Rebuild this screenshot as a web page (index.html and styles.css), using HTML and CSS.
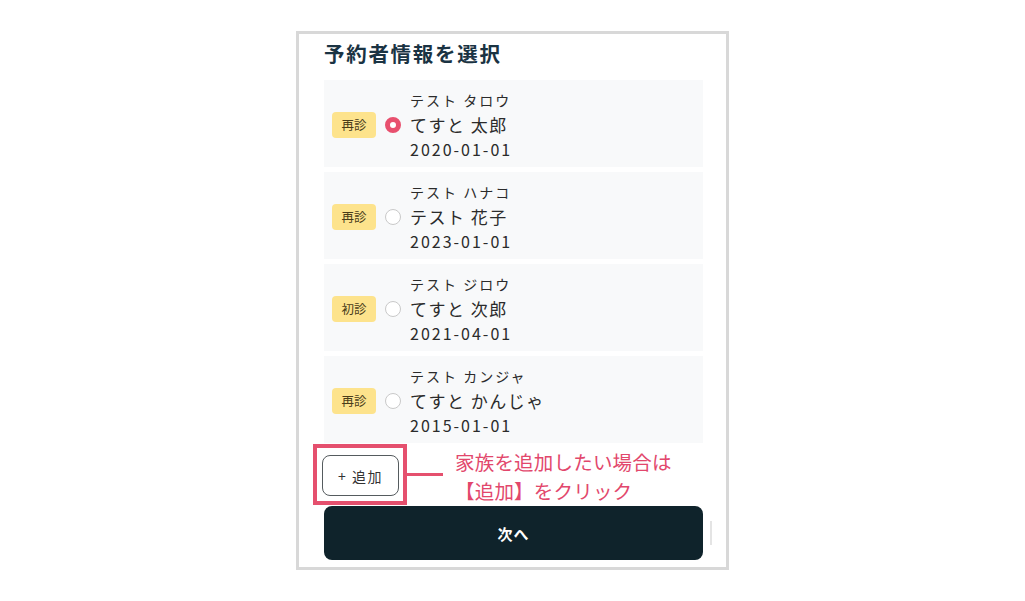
FILE: index.html
```html
<!DOCTYPE html>
<html lang="ja">
<head>
<meta charset="utf-8">
<title>予約者情報を選択</title>
<link rel="stylesheet" href="styles.css">
</head>
<body>
<div class="frame">
  <h1 class="title">予約者情報を選択</h1>
  <div class="list">
    <div class="card">
      <span class="badge">再診</span>
      <span class="radio checked"></span>
      <div class="info">
        <div class="kana">テスト タロウ</div>
        <div class="name">てすと 太郎</div>
        <div class="date">2020-01-01</div>
      </div>
    </div>
    <div class="card">
      <span class="badge">再診</span>
      <span class="radio"></span>
      <div class="info">
        <div class="kana">テスト ハナコ</div>
        <div class="name">テスト 花子</div>
        <div class="date">2023-01-01</div>
      </div>
    </div>
    <div class="card">
      <span class="badge">初診</span>
      <span class="radio"></span>
      <div class="info">
        <div class="kana">テスト ジロウ</div>
        <div class="name">てすと 次郎</div>
        <div class="date">2021-04-01</div>
      </div>
    </div>
    <div class="card">
      <span class="badge">再診</span>
      <span class="radio"></span>
      <div class="info">
        <div class="kana">テスト カンジャ</div>
        <div class="name">てすと かんじゃ</div>
        <div class="date">2015-01-01</div>
      </div>
    </div>
  </div>
  <div class="add-row">
    <div class="add-wrap">
      <button class="add-btn">+ 追加</button>
      <span class="highlight"></span>
    </div>
    <span class="connector"></span>
    <div class="note">
      <div>家族を追加したい場合は</div>
      <div>【追加】をクリック</div>
    </div>
  </div>
  <button class="next-btn">次へ</button>
  <span class="scroll-thumb"></span>
</div>
</body>
</html>
```
FILE: styles.css
```css
html, body {
  margin: 0;
  padding: 0;
  background: #ffffff;
}
body {
  font-family: "Noto Sans CJK JP", "Noto Sans", sans-serif;
  color: #2b2b2b;
}
.frame {
  position: relative;
  box-sizing: border-box;
  width: 433px;
  height: 539px;
  margin: 31px auto 0;
  border: 3px solid #d8d8d8;
  padding: 4px 23px 7px 25px;
  display: flex;
  flex-direction: column;
}
.title {
  margin: 0 0 12px;
  font-size: 20.5px;
  line-height: 30px;
  font-weight: 700;
  letter-spacing: 1.7px;
  color: #1a3343;
}
.list {
  display: flex;
  flex-direction: column;
  gap: 5px;
}
.card {
  box-sizing: border-box;
  height: 87px;
  background: #f8f9fa;
  display: flex;
  align-items: center;
  padding: 8px 8px 5px 8px;
}
.badge {
  width: 44px;
  height: 26px;
  border-radius: 4px;
  background: #fde38c;
  font-size: 12.5px;
  line-height: 26px;
  text-align: center;
  color: #4a3d1a;
  flex-shrink: 0;
}
.radio {
  box-sizing: border-box;
  width: 16px;
  height: 16px;
  margin: 0 9px;
  border-radius: 50%;
  border: 1px solid #c9c9c9;
  background: #fff;
  flex-shrink: 0;
}
.radio.checked {
  border: 5px solid #e8506e;
}
.info {
  display: flex;
  flex-direction: column;
}
.kana {
  font-size: 14px;
  line-height: 24px;
  letter-spacing: 2px;
}
.name {
  font-size: 17px;
  line-height: 25px;
  letter-spacing: 1.5px;
}
.date {
  font-size: 16px;
  line-height: 25px;
  letter-spacing: 2px;
}
.add-row {
  display: flex;
  align-items: center;
  height: 41px;
  margin: 12px 0 10px -2px;
}
.add-wrap {
  position: relative;
  width: 77px;
  height: 41px;
}
.add-btn {
  box-sizing: border-box;
  width: 77px;
  height: 41px;
  border: 1.5px solid #555b5e;
  border-radius: 8px;
  background: #fff;
  font-family: "Noto Sans CJK JP", "Noto Sans", sans-serif;
  font-size: 14px;
  letter-spacing: 1.5px;
  color: #333;
  padding: 0;
}
.highlight {
  position: absolute;
  box-sizing: border-box;
  left: -9px;
  top: -11px;
  width: 94px;
  height: 61px;
  border: 4px solid #e5506e;
  pointer-events: none;
}
.connector {
  width: 36px;
  height: 3px;
  margin-left: 8px;
  margin-top: -3px;
  background: #e5506e;
}
.note {
  margin-left: 12px;
  font-size: 19.5px;
  line-height: 29px;
  letter-spacing: 0.2px;
  color: #e2476c;
  white-space: nowrap;
}
.next-btn {
  height: 54px;
  border: none;
  border-radius: 8px;
  background: #0f232b;
  color: #ffffff;
  font-family: "Noto Sans CJK JP", "Noto Sans", sans-serif;
  font-size: 15px;
  font-weight: 700;
  letter-spacing: 1px;
}
.scroll-thumb {
  position: absolute;
  right: 14px;
  bottom: 22px;
  width: 2px;
  height: 24px;
  background: #e4e4e4;
}
```
